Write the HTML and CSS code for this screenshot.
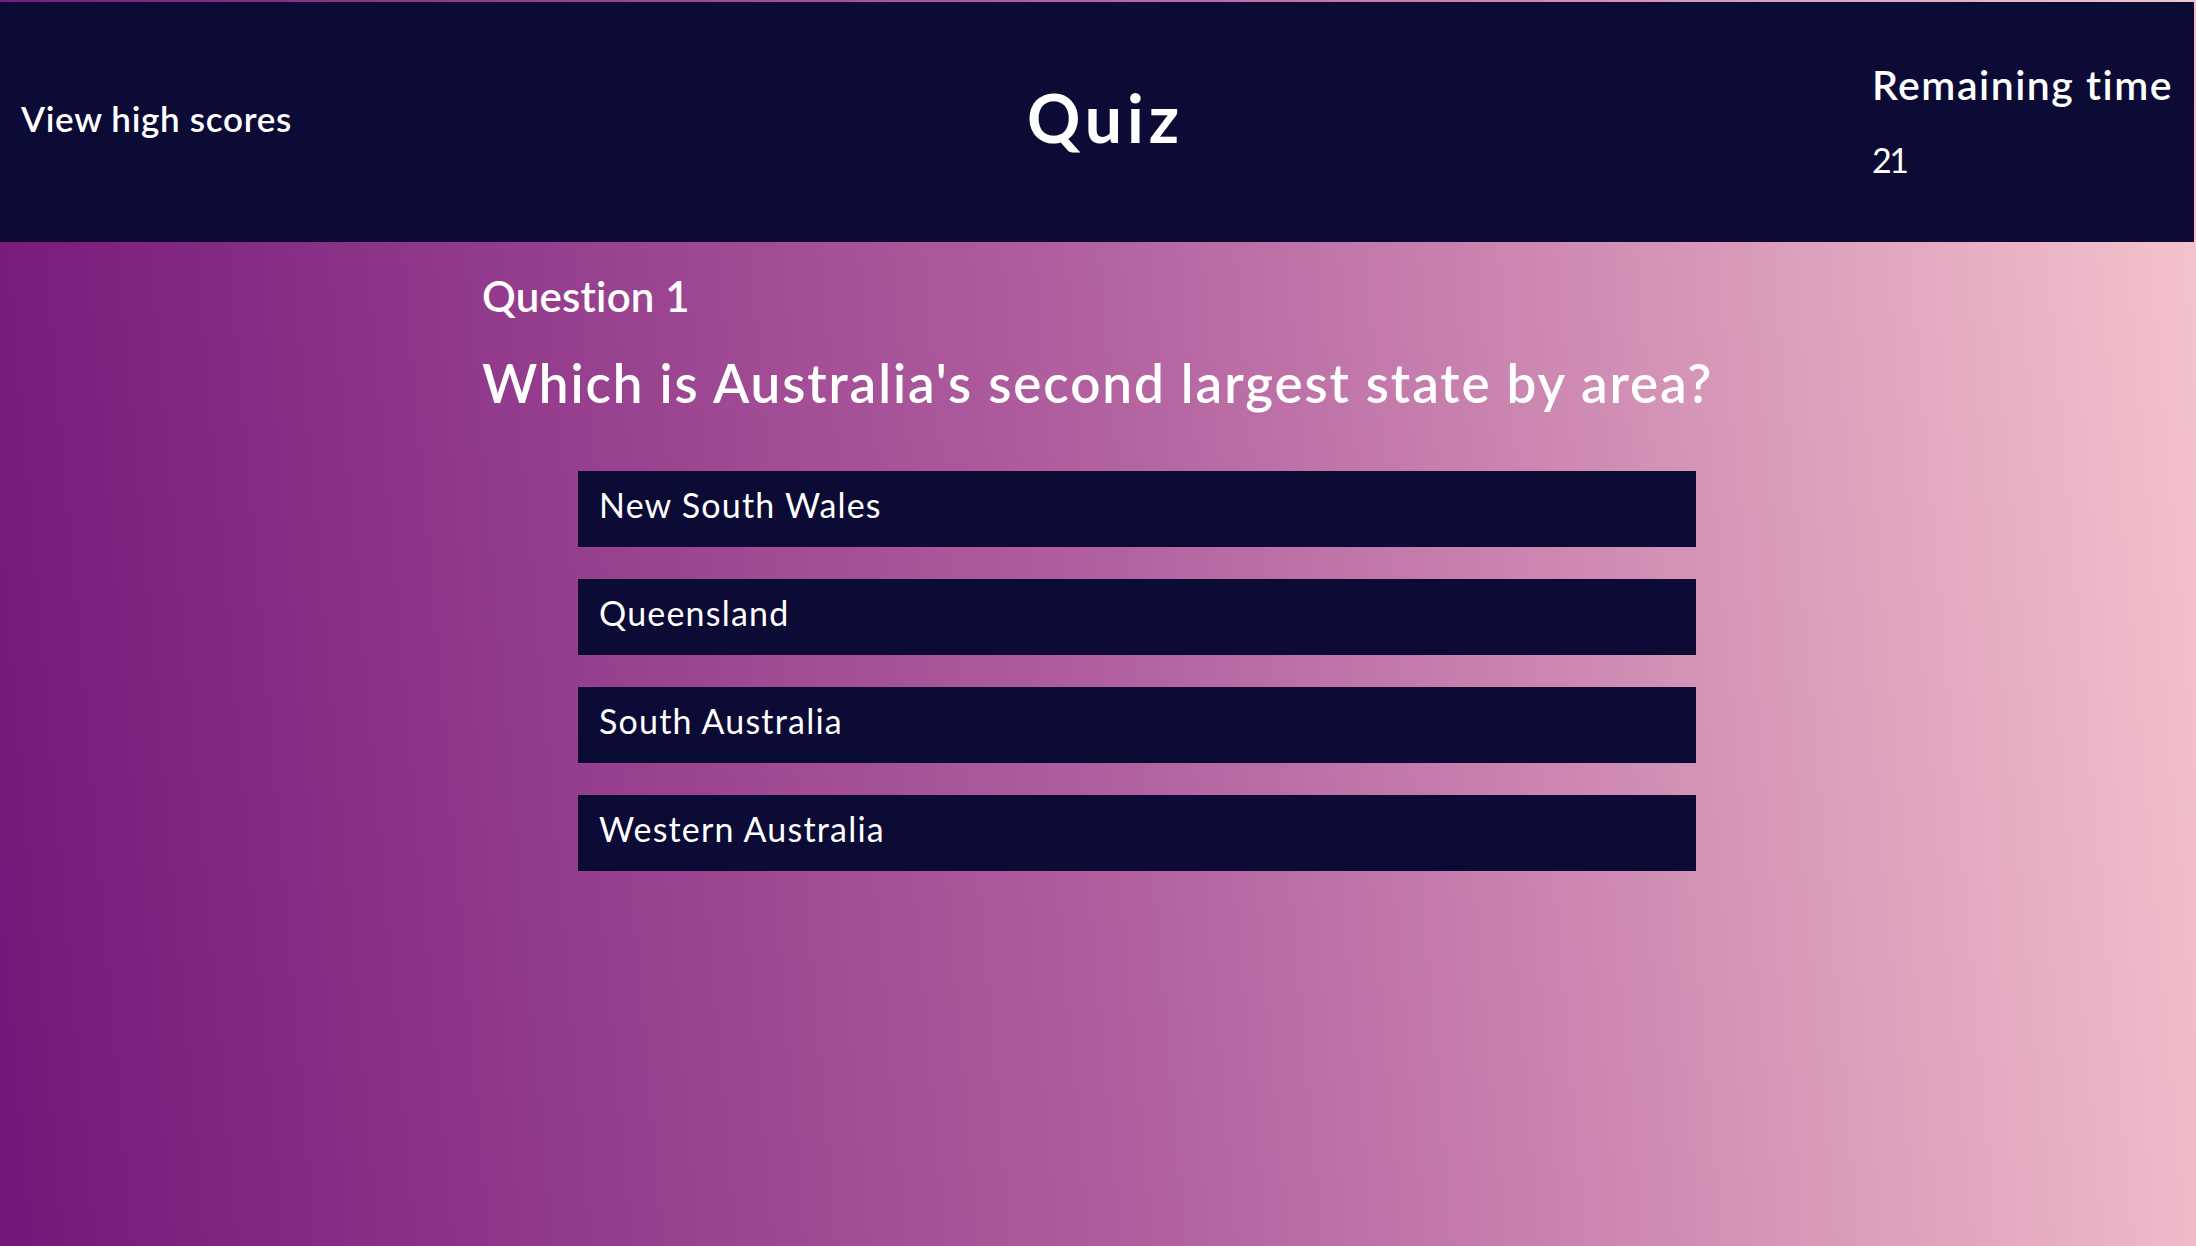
FILE: index.html
```html
<!DOCTYPE html>
<html lang="en">
<head>
<meta charset="utf-8">
<title>Quiz</title>
<link rel="stylesheet" href="styles.css">
</head>
<body>
<header class="topbar">
  <a class="scores-link" href="#">View high scores</a>
  <h1 class="title">Quiz</h1>
  <div class="timer">
    <h2 class="timer-label">Remaining time</h2>
    <p class="timer-value">21</p>
  </div>
</header>
<main class="quiz">
  <h3 class="q-number">Question 1</h3>
  <h2 class="q-text">Which is Australia's second largest state by area?</h2>
  <ul class="answers">
    <li><button class="answer">New South Wales</button></li>
    <li><button class="answer">Queensland</button></li>
    <li><button class="answer">South Australia</button></li>
    <li><button class="answer">Western Australia</button></li>
  </ul>
</main>
</body>
</html>
```

FILE: styles.css
```css
html, body {
  margin: 0;
  padding: 0;
}
body {
  font-family: "Lato", "Noto Sans", sans-serif;
  line-height: 1.2;
  color: #ffffff;
  background: linear-gradient(85deg, #741678 0%, #b15f9f 50%, #f5c4cd 100%);
  min-height: 1246px;
  padding-top: 2px;
  box-sizing: border-box;
}
.topbar {
  margin-right: 2px;
  height: 240px;
  background: #0b0b36;
  display: grid;
  grid-template-columns: 1fr auto 1fr;
  align-items: center;
  padding: 0 21px;
  box-sizing: border-box;
}
.scores-link {
  justify-self: start;
  margin-bottom: 8px;
  color: #ffffff;
  text-decoration: none;
  font-size: 35px;
  font-weight: 600;
  letter-spacing: 0.7px;
}
.title {
  margin: 0 0 8px 17px;
  font-size: 66px;
  font-weight: 700;
  letter-spacing: 5px;
}
.timer {
  justify-self: end;
  margin-bottom: 4px;
}
.timer-label {
  margin: 0;
  font-size: 41px;
  font-weight: 600;
  letter-spacing: 1.5px;
}
.timer-value {
  margin: 31px 0 0;
  font-size: 34px;
  font-weight: 400;
  letter-spacing: -2.5px;
}
.quiz {
  padding-left: 482px;
  padding-top: 29px;
}
.q-number {
  margin: 0;
  font-size: 42px;
  font-weight: 600;
  letter-spacing: 0.2px;
}
.q-text {
  margin: 30px 0 0;
  font-size: 53px;
  font-weight: 600;
  letter-spacing: 1.9px;
}
.answers {
  list-style: none;
  margin: 56px 0 0 96px;
  padding: 0;
  width: 1118px;
  display: flex;
  flex-direction: column;
  gap: 32px;
}
.answer {
  display: block;
  width: 100%;
  height: 76px;
  background: #0b0b36;
  color: #ffffff;
  border: 0;
  padding: 0 0 7px 21px;
  text-align: left;
  font-family: inherit;
  line-height: 1.2;
  font-size: 34px;
  font-weight: 400;
  letter-spacing: 1.2px;
}
```
